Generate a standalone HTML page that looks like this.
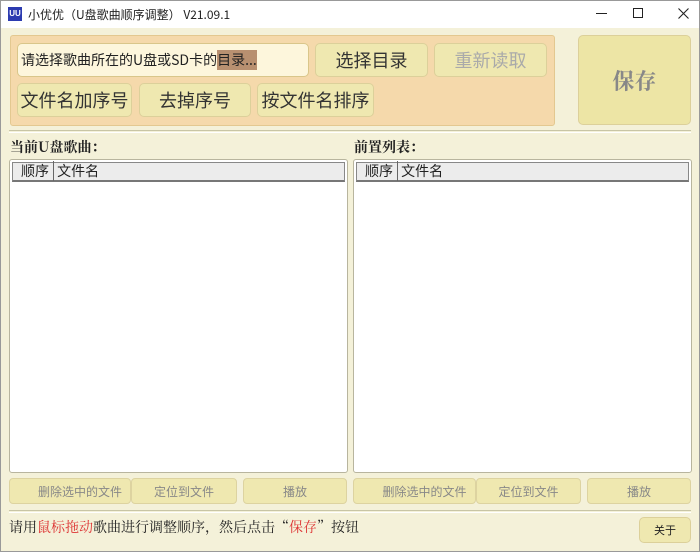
<!DOCTYPE html>
<html><head><meta charset="utf-8"><style>
*{box-sizing:border-box;margin:0;padding:0}
body{width:700px;height:552px;overflow:hidden;background:#f4f1d9;font-family:"Liberation Sans","Noto Sans CJK SC",sans-serif;position:relative}
.a{position:absolute}
.title{left:0;top:0;width:700px;height:28px;background:#fff}
.btn{position:absolute;background:#efe8b0;border:1px solid #dcd09a;border-radius:5px;display:flex;align-items:center;justify-content:center;color:#333;font-size:18px;font-family:"Noto Sans CJK SC",sans-serif}
.sb{position:absolute;background:#efe8b0;border:1px solid #ddd3a0;border-radius:4px;display:flex;align-items:center;justify-content:center;color:#888;font-size:12px;font-family:"Noto Sans CJK SC",sans-serif}
.list{position:absolute;background:#fff;border:1px solid #b8b59e;border-radius:3px}
.hdr{position:absolute;left:2px;right:2px;top:2px;height:20px;background:#ececec;border:1px solid #888;border-bottom:2px solid #777;font-size:14px;color:#222;font-family:"Noto Sans CJK SC",sans-serif;line-height:16px}
.lbl{position:absolute;font-family:"Noto Serif CJK SC",serif;font-weight:bold;font-size:14px;color:#222}
</style></head><body>
<div class="a title"></div>
<div class="a" style="left:0;top:0;width:700px;height:552px;border:1px solid #999;z-index:5;pointer-events:none"></div>
<div class="a" style="left:8px;top:7px;width:14px;height:14px;background:#2c3bb0;color:#fff;font-size:8px;line-height:14px;text-align:center;font-weight:bold">UU</div>
<div class="a" style="left:28px;top:6px;font-size:12px;color:#222;font-family:'Noto Sans CJK SC',sans-serif">小优优（U盘歌曲顺序调整） V21.09.1</div>
<div class="a" style="left:596px;top:13px;width:11px;height:1px;background:#222"></div>
<div class="a" style="left:633px;top:8px;width:10px;height:10px;border:1px solid #222"></div>
<svg class="a" style="left:678px;top:8px" width="11" height="11"><path d="M0.5 0.5L10.5 10.5M10.5 0.5L0.5 10.5" stroke="#222" stroke-width="1.1"/></svg>

<div class="a" style="left:10px;top:35px;width:545px;height:91px;background:#f5d9ab;border:1px solid #e3c890;border-radius:3px"></div>
<div class="a" style="left:17px;top:43px;width:292px;height:34px;background:#fdf6dc;border:1px solid #d9c68a;border-radius:5px;font-size:14px;line-height:32px;padding-left:3px;color:#222;font-family:'Noto Sans CJK SC',sans-serif">请选择歌曲所在的U盘或SD卡的<span style="background:#b89070">目录...</span></div>
<div class="btn" style="left:315px;top:43px;width:113px;height:34px">选择目录</div>
<div class="btn" style="left:434px;top:43px;width:113px;height:34px;color:#aaa">重新读取</div>
<div class="btn" style="left:17px;top:83px;width:115px;height:34px">文件名加序号</div>
<div class="btn" style="left:139px;top:83px;width:112px;height:34px">去掉序号</div>
<div class="btn" style="left:257px;top:83px;width:117px;height:34px">按文件名排序</div>
<div class="btn" style="left:578px;top:35px;width:113px;height:90px;background:#ede5a5;color:#888;font-size:22px;font-family:'Noto Serif CJK SC',serif;font-weight:bold">保存</div>
<div class="a" style="left:9px;top:130px;width:682px;height:3px;border-top:1px solid #c8c5a5;border-bottom:1px solid #fff"></div>

<div class="lbl" style="left:10px;top:137px">当前U盘歌曲：</div>
<div class="lbl" style="left:354px;top:137px">前置列表：</div>
<div class="list" style="left:9px;top:159px;width:339px;height:314px"><div class="hdr"><span style="padding:0 4px 0 8px;border-right:1px solid #666">顺序</span> 文件名</div></div>
<div class="list" style="left:353px;top:159px;width:339px;height:314px"><div class="hdr"><span style="padding:0 4px 0 8px;border-right:1px solid #666">顺序</span> 文件名</div></div>

<div class="sb" style="left:9px;top:478px;width:122px;height:26px;padding-left:20px">删除选中的文件</div>
<div class="sb" style="left:131px;top:478px;width:106px;height:26px">定位到文件</div>
<div class="sb" style="left:243px;top:478px;width:104px;height:26px">播放</div>
<div class="sb" style="left:353px;top:478px;width:123px;height:26px;padding-left:20px">删除选中的文件</div>
<div class="sb" style="left:476px;top:478px;width:105px;height:26px">定位到文件</div>
<div class="sb" style="left:587px;top:478px;width:104px;height:26px">播放</div>
<div class="a" style="left:9px;top:510px;width:682px;height:3px;border-top:1px solid #c8c5a5;border-bottom:1px solid #fff"></div>
<div class="a" style="left:9px;top:517px;font-size:14px;color:#222;font-family:'Noto Serif CJK SC',serif">请用<span style="color:#d33">鼠标拖动</span>歌曲进行调整顺序，然后点击“<span style="color:#d33">保存</span>”按钮</div>
<div class="btn" style="left:639px;top:517px;width:52px;height:26px;font-size:11px;color:#222">关于</div>
</body></html>
